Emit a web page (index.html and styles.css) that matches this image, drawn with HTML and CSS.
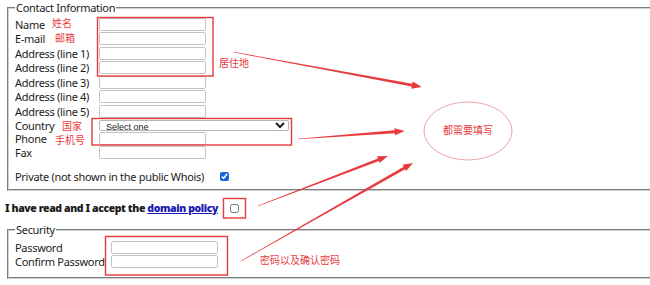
FILE: index.html
```html
<!DOCTYPE html>
<html lang="en">
<head>
<meta charset="utf-8">
<title>Domain registration</title>
<link rel="stylesheet" href="styles.css">
</head>
<body>
<div class="page">
  <form class="form">
    <fieldset class="box contact">
      <legend class="legend">Contact Information</legend>
      <div class="grid">
        <label class="lbl">Name</label><input class="field" type="text">
        <label class="lbl">E-mail</label><input class="field" type="text">
        <label class="lbl">Address (line 1)</label><input class="field" type="text">
        <label class="lbl">Address (line 2)</label><input class="field" type="text">
        <label class="lbl">Address (line 3)</label><input class="field" type="text">
        <label class="lbl">Address (line 4)</label><input class="field" type="text">
        <label class="lbl">Address (line 5)</label><input class="field" type="text">
        <label class="lbl">Country</label><select class="sel"><option>Select one</option></select>
        <label class="lbl">Phone</label><input class="field" type="text">
        <label class="lbl">Fax</label><input class="field" type="text">
      </div>
      <div class="private">
        <span>Private (not shown in the public Whois)</span>
        <input class="check checked" type="checkbox" checked>
      </div>
    </fieldset>

    <div class="accept">
      <b>I have read and I accept the <a class="link" href="#">domain policy</a></b>
      <input class="check" type="checkbox">
    </div>

    <fieldset class="box security">
      <legend class="legend">Security</legend>
      <div class="grid grid-sec">
        <label class="lbl">Password</label><input class="field" type="password">
        <label class="lbl">Confirm Password</label><input class="field" type="password">
      </div>
    </fieldset>
  </form>

  <svg class="notes" width="650" height="285" viewBox="0 0 650 285">
    <g class="frames" fill="none" stroke="#e2393d" stroke-width="1.4">
      <rect x="97.5" y="17.5" width="115.5" height="58.5"/>
      <rect x="92" y="118.5" width="199.5" height="26.5"/>
      <rect x="223.5" y="198.5" width="22" height="19.5"/>
      <rect x="105.5" y="236.5" width="122" height="38.5"/>
    </g>
    <ellipse cx="468" cy="131" rx="44" ry="29" fill="none" stroke="#eaa3a6" stroke-width="1"/>
    <g fill="#e8393d">
      <g transform="translate(233,52) rotate(10.49)">
        <polygon points="0,-0.3 182,-1.4 182,-3.6 192,0 182,3.6 182,1.4 0,0.3"/>
      </g>
      <g transform="translate(298,139) rotate(-4.28)">
        <polygon points="0,-0.3 97,-1.4 97,-3.6 107,0 97,3.6 97,1.4 0,0.3"/>
      </g>
      <g transform="translate(258,206) rotate(-21.04)">
        <polygon points="0,-0.3 129,-1.4 129,-3.6 139,0 129,3.6 129,1.4 0,0.3"/>
      </g>
      <g transform="translate(241,261) rotate(-29.67)">
        <polygon points="0,-0.3 188,-1.4 188,-3.6 198,0 188,3.6 188,1.4 0,0.3"/>
      </g>
    </g>
    <g class="tags">
      <text x="52" y="27">姓名</text>
      <text x="55" y="42">邮箱</text>
      <text x="219" y="67">居住地</text>
      <text x="62" y="130">国家</text>
      <text x="55" y="144">手机号</text>
      <text x="260" y="264">密码以及确认密码</text>
      <text x="468" y="134" text-anchor="middle">都需要填写</text>
    </g>
  </svg>
</div>
</body>
</html>
```

FILE: styles.css
```css
html, body {
  margin: 0;
  padding: 0;
  overflow: hidden;
  background: #fff;
}

.page {
  position: relative;
  width: 650px;
  height: 285px;
  overflow: hidden;
  font-family: "Noto Sans", "Open Sans", sans-serif;
  font-size: 11px;
  letter-spacing: -0.3px;
  color: #1b1b1b;
}

.form {
  width: 700px;
  padding: 1px 0 0 5px;
}

.box {
  margin: 0 0 0 2px;
  border: 2px groove #d0d0d0;
  border-right: none;
  padding: 2px 8px 5.5px 6px;
}

.security {
  padding-bottom: 7.5px;
}

.legend {
  padding: 0 1px;
  line-height: 14px;
  font-size: 11px;
}

.grid {
  display: grid;
  grid-template-columns: 84px 107px;
  grid-template-rows: repeat(7, 14.5px) 13px 14px 14.5px;
  align-items: center;
  line-height: 13px;
}

.lbl {
  white-space: nowrap;
}

.field {
  box-sizing: border-box;
  width: 107px;
  height: 13px;
  margin: 0;
  padding: 0;
  border: 1px solid #c4c4c4;
  border-radius: 2px;
  background: #fff;
}

.sel {
  box-sizing: border-box;
  width: 190px;
  height: 11px;
  margin: 0;
  padding: 0 0 0 2px;
  border: 1px solid #b5b5b5;
  border-radius: 2px;
  font-family: "Liberation Sans", Arial, sans-serif;
  font-size: 9px;
  letter-spacing: 0;
  line-height: 9px;
  color: #222;
  background: #fff;
}

.private {
  display: flex;
  align-items: center;
  gap: 16px;
  margin-top: 9.5px;
  line-height: 14px;
}

.check {
  width: 9px;
  height: 9px;
  margin: 0;
  accent-color: #1565d8;
}

.accept {
  box-sizing: border-box;
  display: flex;
  align-items: center;
  gap: 12px;
  height: 32px;
  padding-top: 2px;
  margin: 0;
  font-size: 10.5px;
  letter-spacing: -0.4px;
  font-weight: bold;
}

.link {
  color: #1a1ab0;
  text-decoration: underline;
}

.grid-sec {
  grid-template-columns: 96px 107px;
  grid-template-rows: 14.5px 14.5px;
  margin-top: 1px;
}

.notes {
  position: absolute;
  left: 0;
  top: 0;
  pointer-events: none;
}

.tags text {
  font-family: "Noto Sans CJK SC", sans-serif;
  font-size: 10px;
  letter-spacing: 0;
  fill: #e8393d;
}
```
